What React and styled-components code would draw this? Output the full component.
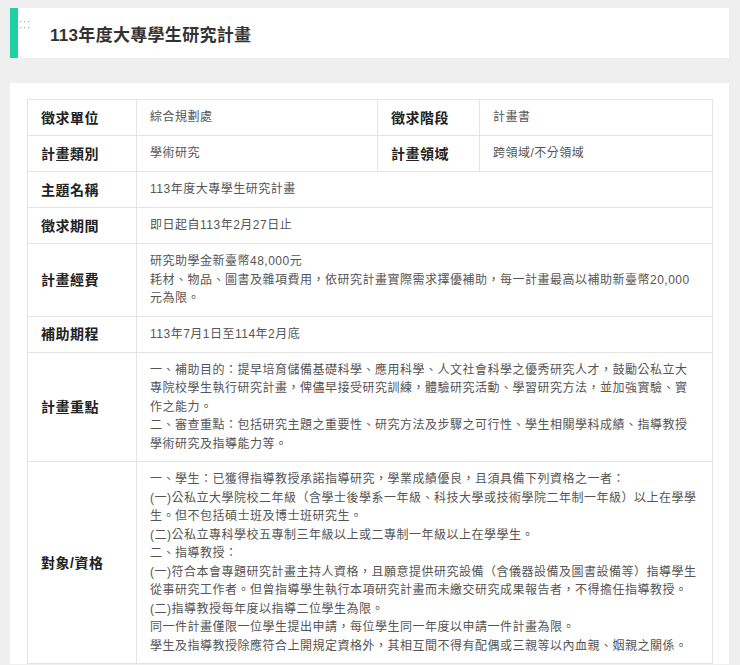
import React from "react";
import styled, { createGlobalStyle } from "styled-components";

const GlobalStyle = createGlobalStyle`
  body {
    margin: 0;
    background-color: #efefef;
    font-family: "Liberation Sans", "Noto Sans CJK TC", sans-serif;
  }
`;

const Page = styled.div`
  padding: 8px 11px 0 10px;
  display: flex;
  flex-direction: column;
  gap: 25px;
`;

const HeaderCard = styled.div`
  display: flex;
  align-items: center;
  height: 50px;
  background-color: #fff;
  border-left: 8px solid #1fd0a0;
  position: relative;
`;

const Dots = styled.svg`
  position: absolute;
  left: 1px;
  top: 12px;
`;

const Title = styled.h1`
  margin: 0 0 0 32px;
  font-size: 17px;
  font-weight: 700;
  color: #333;
  letter-spacing: 0.3px;
`;

const Card = styled.div`
  background-color: #fff;
  padding: 16px 17px 0;
`;

const Table = styled.table`
  width: 685px;
  border-collapse: collapse;
  table-layout: fixed;
  border: 1px solid #dedede;
`;

const Row = styled.tr`
  height: 36px;
`;

const Label = styled.th`
  padding: 8px 13px;
  border: 1px solid #e4e4e4;
  text-align: left;
  vertical-align: middle;
  font-size: 14px;
  font-weight: 700;
  color: #222;
  letter-spacing: 0.5px;
  line-height: 18px;
`;

const Value = styled.td`
  padding: 8px 14px 8px 13px;
  border: 1px solid #e4e4e4;
  vertical-align: middle;
  font-size: 12px;
  color: #555;
  letter-spacing: 0.5px;
  line-height: 18.5px;
`;

const Line = styled.div``;

const rows = [
  {
    label: "主題名稱",
    lines: ["113年度大專學生研究計畫"],
  },
  {
    label: "徵求期間",
    lines: ["即日起自113年2月27日止"],
  },
  {
    label: "計畫經費",
    lines: [
      "研究助學金新臺幣48,000元",
      "耗材、物品、圖書及雜項費用，依研究計畫實際需求擇優補助，每一計畫最高以補助新臺幣20,000元為限。",
    ],
  },
  {
    label: "補助期程",
    lines: ["113年7月1日至114年2月底"],
  },
  {
    label: "計畫重點",
    lines: [
      "一、補助目的：提早培育儲備基礎科學、應用科學、人文社會科學之優秀研究人才，鼓勵公私立大專院校學生執行研究計畫，俾儘早接受研究訓練，體驗研究活動、學習研究方法，並加強實驗、實作之能力。",
      "二、審查重點：包括研究主題之重要性、研究方法及步驟之可行性、學生相關學科成績、指導教授學術研究及指導能力等。",
    ],
  },
  {
    label: "對象/資格",
    lines: [
      "一、學生：已獲得指導教授承諾指導研究，學業成績優良，且須具備下列資格之一者：",
      "(一)公私立大學院校二年級（含學士後學系一年級、科技大學或技術學院二年制一年級）以上在學學生。但不包括碩士班及博士班研究生。",
      "(二)公私立專科學校五專制三年級以上或二專制一年級以上在學學生。",
      "二、指導教授：",
      "(一)符合本會專題研究計畫主持人資格，且願意提供研究設備（含儀器設備及圖書設備等）指導學生從事研究工作者。但曾指導學生執行本項研究計畫而未繳交研究成果報告者，不得擔任指導教授。",
      "(二)指導教授每年度以指導二位學生為限。",
      "同一件計畫僅限一位學生提出申請，每位學生同一年度以申請一件計畫為限。",
      "學生及指導教授除應符合上開規定資格外，其相互間不得有配偶或三親等以內血親、姻親之關係。",
    ],
  },
];

const DotGrid = () => (
  <Dots width="12" height="10" viewBox="0 0 12 10">
    {[0, 1].map((r) =>
      [0, 1, 2].map((c) => (
        <rect
          key={`${r}-${c}`}
          x={1 + c * 4}
          y={1 + r * 6}
          width="1.2"
          height="1.2"
          fill="#4fd6b4"
        />
      ))
    )}
  </Dots>
);

const App = () => {
  return (
    <>
      <GlobalStyle />
      <Page>
        <HeaderCard>
          <DotGrid />
          <Title>113年度大專學生研究計畫</Title>
        </HeaderCard>
        <Card>
          <Table>
            <colgroup>
              <col style={{ width: 109 }} />
              <col style={{ width: 241 }} />
              <col style={{ width: 102 }} />
              <col style={{ width: 233 }} />
            </colgroup>
            <tbody>
              <Row>
                <Label>徵求單位</Label>
                <Value>綜合規劃處</Value>
                <Label>徵求階段</Label>
                <Value>計畫書</Value>
              </Row>
              <Row>
                <Label>計畫類別</Label>
                <Value>學術研究</Value>
                <Label>計畫領域</Label>
                <Value>跨領域/不分領域</Value>
              </Row>
              {rows.map((row) => (
                <Row key={row.label}>
                  <Label>{row.label}</Label>
                  <Value colSpan={3}>
                    {row.lines.map((line, i) => (
                      <Line key={i}>{line}</Line>
                    ))}
                  </Value>
                </Row>
              ))}
            </tbody>
          </Table>
        </Card>
      </Page>
    </>
  );
};

export default App;
